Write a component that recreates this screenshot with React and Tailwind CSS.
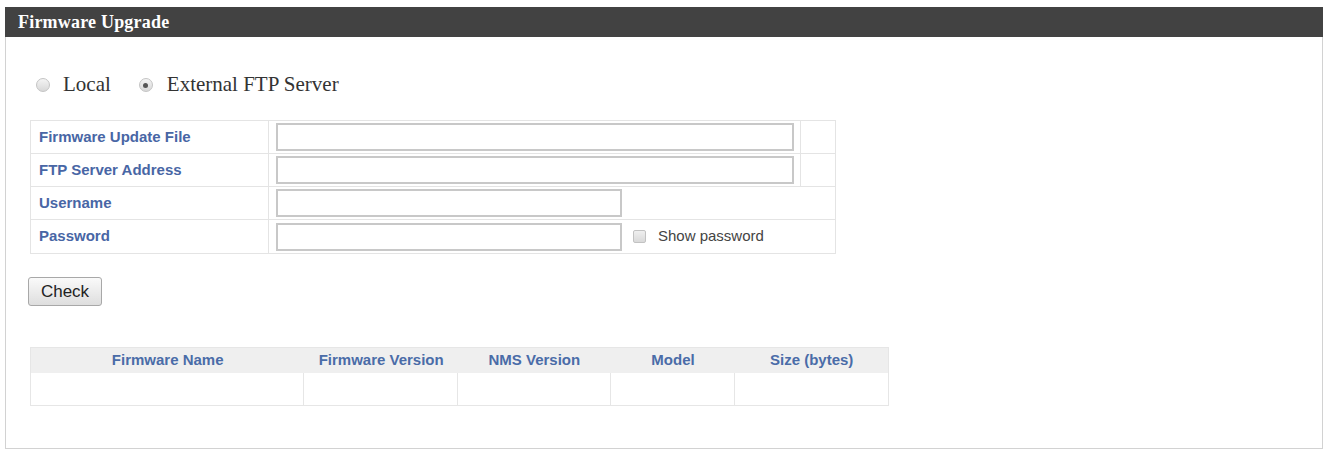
import React from 'react';

const serif = "font-['Liberation_Serif','Times_New_Roman',serif]";
const sans = "font-['Liberation_Sans',Arial,sans-serif]";

function Radio({ checked, className = '' }) {
  return (
    <span className={`flex h-[14px] w-[14px] shrink-0 items-center justify-center rounded-full border border-[#c4c4c4] bg-gradient-to-b from-[#f4f4f4] to-[#d8d8d8] ${className}`}>
      {checked && <span className="h-[5px] w-[5px] rounded-full bg-[#555]" />}
    </span>
  );
}

function TextInput({ wide }) {
  return (
    <input
      type="text"
      className={`h-[28px] border-2 border-[#c8c8c8] bg-white outline-none ${wide ? 'w-[518px]' : 'w-[346px]'}`}
    />
  );
}

const formRows = [
  { label: 'Firmware Update File', wide: true },
  { label: 'FTP Server Address', wide: true },
  { label: 'Username', wide: false },
  { label: 'Password', wide: false, showPw: true },
];

const resultCols = [
  { label: 'Firmware Name', w: 'w-[274px]' },
  { label: 'Firmware Version', w: 'w-[154px]' },
  { label: 'NMS Version', w: 'w-[153px]' },
  { label: 'Model', w: 'w-[125px]' },
  { label: 'Size (bytes)', w: 'w-[153px]' },
];

export default function App() {
  return (
    <div className={`min-h-screen bg-white pt-[7px] pl-[5px] ${sans}`}>
      <div className="w-[1318px]">
        {/* header bar */}
        <div className={`flex h-[30px] items-center bg-[#424242] pl-[13px] text-[18px] font-bold tracking-[0.2px] text-white ${serif}`}>
          Firmware Upgrade
        </div>

        <div className="h-[412px] border-x border-b border-[#d2d2d2] pl-[24px] pt-[33px]">
          {/* source selection */}
          <div className={`flex h-[30px] items-center pl-[6px] text-[21px] text-[#333] ${serif}`}>
            <Radio />
            <span className="ml-[13px]">Local</span>
            <Radio checked className="ml-[28px]" />
            <span className="ml-[14px]">External FTP Server</span>
          </div>

          {/* ftp form */}
          <div className="mt-[20px] w-[806px] border border-[#e4e4e4]">
            {formRows.map((r, i) => (
              <div key={r.label} className={`flex h-[33px] ${i < 3 ? 'border-b border-[#e4e4e4]' : ''}`}>
                <div className="flex w-[238px] items-center border-r border-[#e4e4e4] pl-[8px] text-[15px] font-bold text-[#4866a5]">
                  {r.label}
                </div>
                {r.wide ? (
                  <>
                    <div className="flex w-[532px] items-center border-r border-[#e4e4e4] pl-[7px]">
                      <TextInput wide />
                    </div>
                    <div className="flex-1" />
                  </>
                ) : (
                  <div className="flex flex-1 items-center pl-[7px]">
                    <TextInput />
                    {r.showPw && (
                      <>
                        <span className="ml-[11px] h-[13px] w-[13px] rounded-[2px] border border-[#c2c2c2] bg-gradient-to-b from-[#efefef] to-[#d9d9d9]" />
                        <span className="ml-[12px] text-[15px] text-[#444]">Show password</span>
                      </>
                    )}
                  </div>
                )}
              </div>
            ))}
          </div>

          <button
            type="button"
            className="mt-[23px] ml-[-2px] flex h-[29px] w-[74px] items-center justify-center rounded-[3px] border border-[#a8a8a8] bg-gradient-to-b from-[#fafafa] to-[#dedede] text-[17px] text-[#222]"
          >
            Check
          </button>

          {/* results */}
          <div className="mt-[41px] w-[859px] border border-[#e6e6e6]">
            <div className="flex h-[25px] bg-[#efefef]">
              {resultCols.map((c) => (
                <div key={c.label} className={`${c.w} flex items-center justify-center text-[15px] font-bold text-[#4a6ca8]`}>
                  {c.label}
                </div>
              ))}
            </div>
            <div className="flex h-[32px]">
              {resultCols.map((c, i) => (
                <div key={c.label} className={`${c.w} ${i < 4 ? 'border-r border-[#e6e6e6]' : ''}`} />
              ))}
            </div>
          </div>
        </div>
      </div>
    </div>
  );
}
